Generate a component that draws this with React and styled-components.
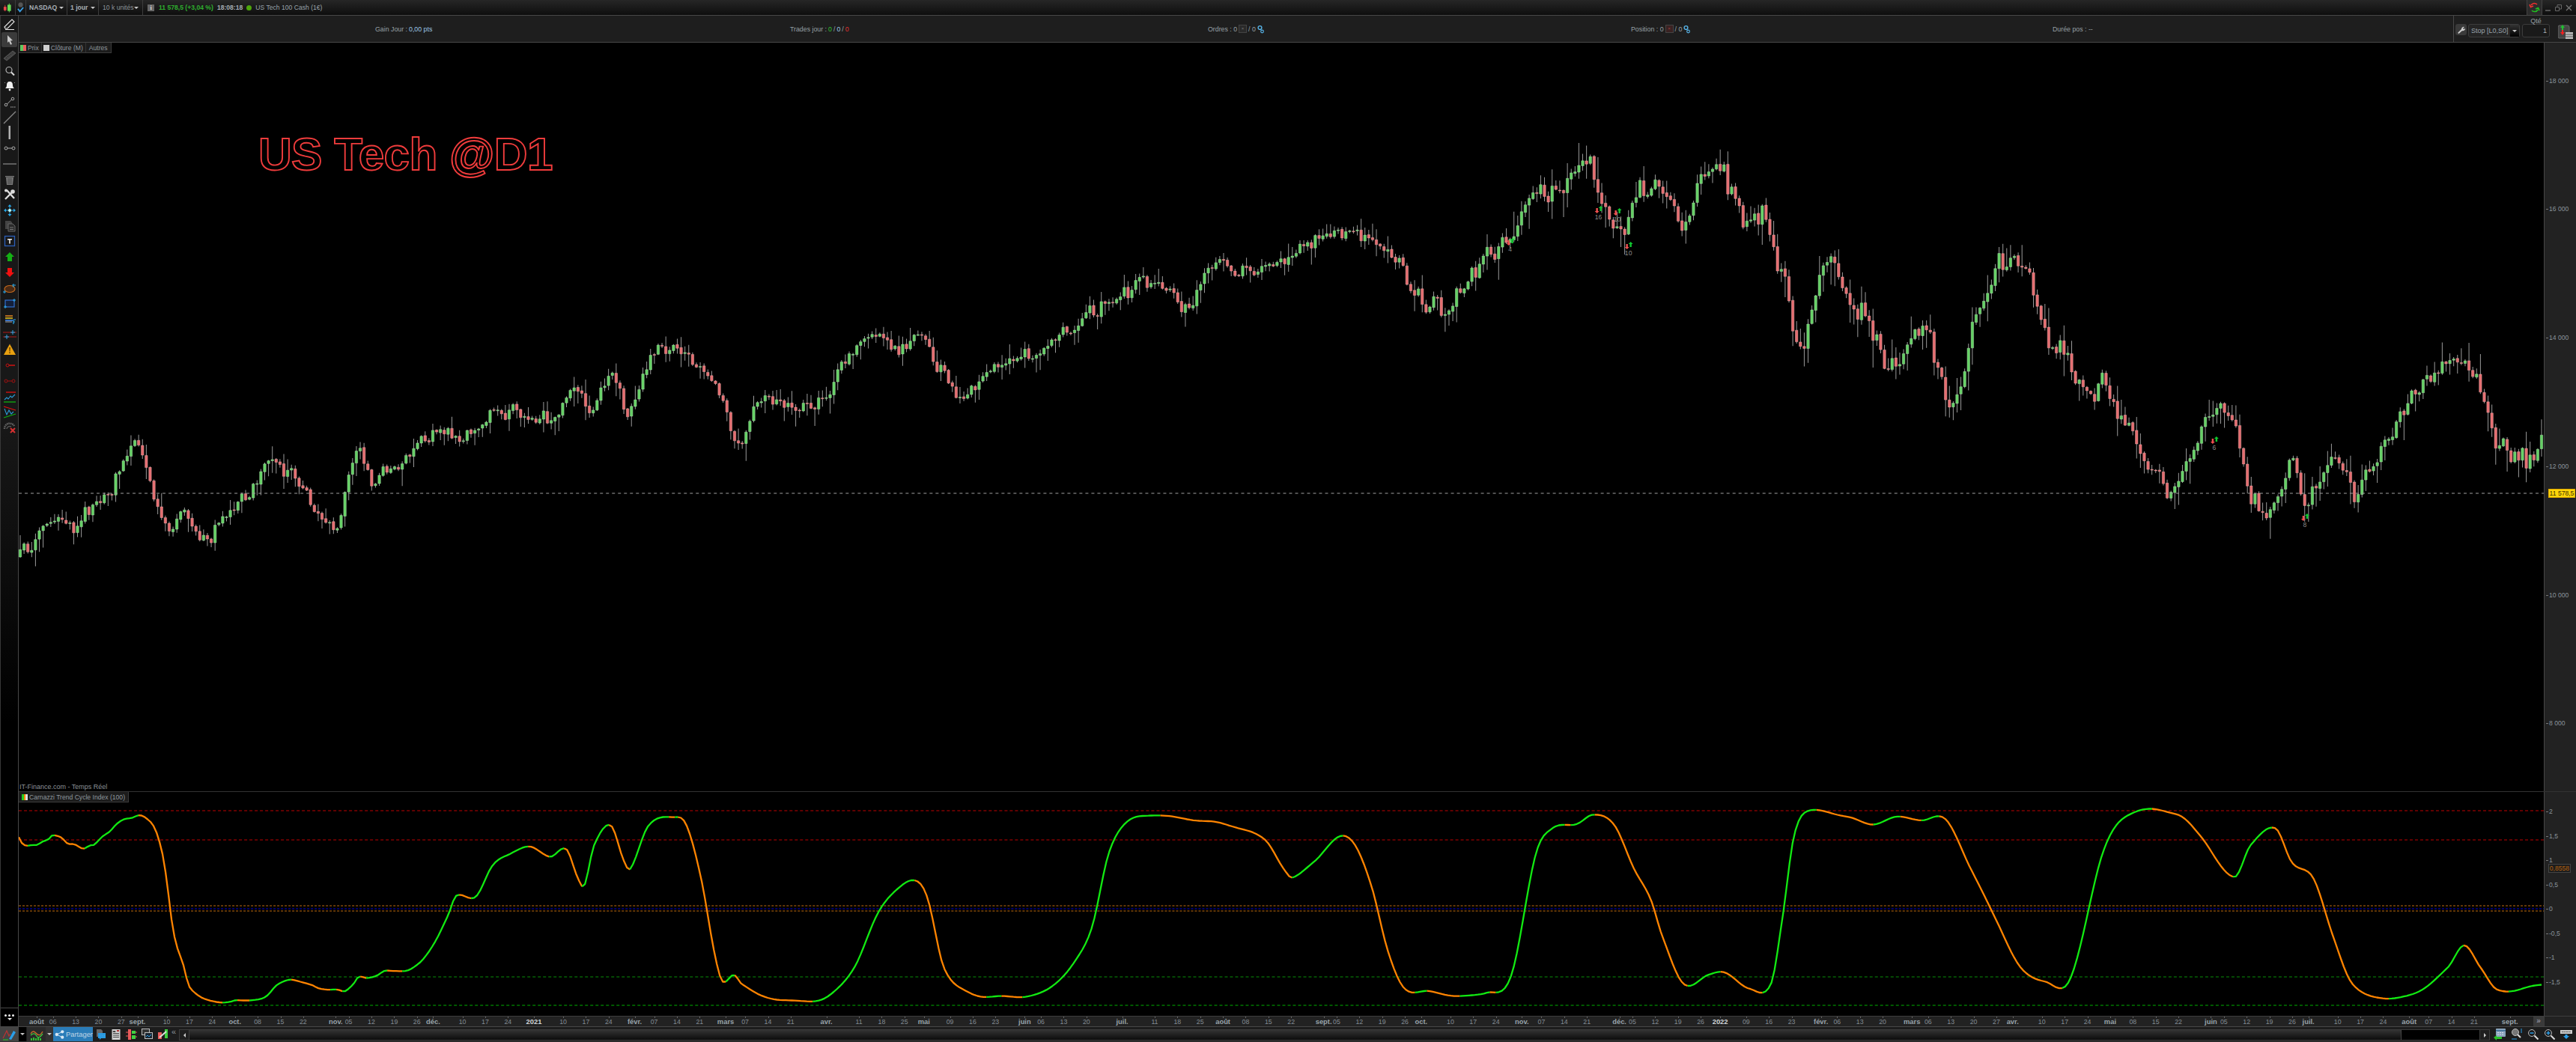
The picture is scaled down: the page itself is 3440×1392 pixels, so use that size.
import React from 'react';
import styled, { createGlobalStyle } from 'styled-components';

const GlobalStyle = createGlobalStyle`
  html, body, #root { margin: 0; padding: 0; height: 100%; background: #000; overflow: hidden; }
  body { font-family: "Liberation Sans", Arial, sans-serif; }
`;

const SCALE = 3440 / 1568;
const BAR = 5.1;

// price curve, read off the picture at 1568 wide
const PRICE_TRACE = [[12,340],[25,322],[35,315],[45,320],[60,305],[72,290],[85,268],[88,280],[92,300],[100,320],[112,310],[125,330],[135,315],[150,300],[165,280],[180,293],[195,310],[205,322],[212,290],[218,272],[226,295],[240,285],[255,275],[270,263],[285,267],[300,255],[318,252],[335,255],[345,240],[360,248],[372,225],[382,250],[395,222],[410,212],[425,225],[437,240],[448,270],[460,250],[470,240],[485,250],[500,243],[512,220],[528,205],[545,210],[560,208],[570,218],[583,243],[595,232],[610,218],[630,216],[650,202],[665,190],[690,177],[710,172],[722,185],[735,163],[755,165],[775,160],[795,150],[815,140],[835,145],[850,160],[862,178],[875,185],[890,178],[905,152],[920,145],[935,115],[950,115],[967,102],[978,125],[988,135],[1000,112],[1015,120],[1025,140],[1037,106],[1050,110],[1062,135],[1072,130],[1085,170],[1097,210],[1110,165],[1125,180],[1135,190],[1150,225],[1165,205],[1175,212],[1190,240],[1205,190],[1222,160],[1235,170],[1245,200],[1258,210],[1270,235],[1285,240],[1300,270],[1310,290],[1325,295],[1340,255],[1350,252],[1360,258],[1370,300],[1380,317],[1395,285],[1405,305],[1420,280],[1435,298],[1450,265],[1470,238],[1480,232],[1497,220],[1510,240],[1520,265],[1535,283],[1547,262]];

// indicator curve: first part from a 2.613x / 3x crop, the rest at 1568 wide
const CYCLE_HEAD = [[67,113],[75,135],[92,152],[115,150],[132,149],[155,132],[170,126],[183,110],[197,110],[218,121],[238,146],[262,150],[290,166],[300,164],[315,151],[330,148],[360,115],[385,97],[410,66],[435,46],[462,38],[488,27],[510,38],[543,85],[570,190],[585,300],[600,440],[610,510],[625,575],[640,620],[660,710],[680,742],[712,767],[770,778],[805,776],[825,771],[845,773],[880,771],[930,755],[965,715],[990,700],[1015,692],[1040,695],[1090,710],[1115,725],[1145,731],[1180,728],[1197,733],[1210,730],[1238,700],[1252,677],[1265,677],[1280,684],[1315,675],[1345,653],[1380,654],[1425,655],[1465,625],[1490,590],[1510,555],[1530,515],[1545,480],[1568,425]];
const CYCLE_TAIL = [[278,546],[290,546],[300,528],[310,521],[322,516],[335,522],[345,517],[352,535],[356,540],[362,515],[372,503],[380,525],[384,530],[395,503],[410,498],[418,502],[427,535],[435,580],[440,598],[447,594],[452,600],[465,607],[490,610],[505,607],[520,590],[535,556],[548,540],[558,537],[565,548],[575,590],[590,605],[610,607],[625,607],[640,602],[655,585],[665,565],[675,520],[685,502],[700,497],[720,499],[745,502],[770,512],[782,530],[787,535],[800,525],[815,510],[825,515],[835,540],[845,580],[855,602],[870,604],[890,607],[905,605],[920,595],[935,520],[945,505],[960,502],[970,497],[983,503],[995,530],[1005,548],[1012,570],[1025,600],[1040,594],[1050,593],[1065,602],[1078,600],[1085,560],[1092,510],[1100,495],[1125,498],[1140,502],[1155,498],[1170,500],[1185,500],[1200,530],[1215,560],[1230,590],[1245,598],[1260,597],[1280,520],[1295,497],[1325,496],[1340,510],[1360,535],[1370,515],[1385,505],[1395,525],[1408,535],[1420,570],[1432,600],[1450,608],[1470,605],[1490,590],[1500,576],[1510,590],[1520,603],[1547,600]];

const rng = (seed) => () => {
  seed |= 0; seed = (seed + 0x6d2b79f5) | 0;
  let t = Math.imul(seed ^ (seed >>> 15), 1 | seed);
  t = (t + Math.imul(t ^ (t >>> 7), 61 | t)) ^ t;
  return ((t ^ (t >>> 14)) >>> 0) / 4294967296;
};

const sampleAt = (pts, x) => {
  let i = 0;
  while (i < pts.length - 2 && pts[i + 1][0] < x) i++;
  const p0 = pts[Math.max(i - 1, 0)], p1 = pts[i], p2 = pts[i + 1], p3 = pts[Math.min(i + 2, pts.length - 1)];
  const t = Math.min(Math.max((x - p1[0]) / (p2[0] - p1[0]), 0), 1);
  const m1 = ((p2[1] - p0[1]) / (p2[0] - p0[0])) * (p2[0] - p1[0]);
  const m2 = ((p3[1] - p1[1]) / (p3[0] - p1[0])) * (p2[0] - p1[0]);
  const t2 = t * t, t3 = t2 * t;
  return (2 * t3 - 3 * t2 + 1) * p1[1] + (t3 - 2 * t2 + t) * m1 + (-2 * t3 + 3 * t2) * p2[1] + (t3 - t2) * m2;
};

const buildCandles = () => {
  const rand = rng(1234);
  const trace = PRICE_TRACE.map(([x, y]) => [x * SCALE, y * SCALE]);
  const wicks = [], up = [], down = [];
  let noise = 0;
  let prev = sampleAt(trace, 28);
  for (let x = 28; x < 3396; x += BAR) {
    const amp = x < 1900 ? 7.5 : 12;
    const r = rand() * 2 - 1;
    noise = noise * 0.4 + r * Math.abs(r) * amp * 1.7;
    const close = sampleAt(trace, x) + noise;
    const open = prev + (rand() - 0.5) * 2;
    const top = Math.min(open, close), bottom = Math.max(open, close);
    const high = top - rand() * rand() * amp * 2.8 - 1;
    const low = bottom + rand() * rand() * amp * 3.2 + 1;
    wicks.push(`M${x.toFixed(1)} ${high.toFixed(1)}V${low.toFixed(1)}`);
    const h = Math.max(bottom - top, 1);
    const body = `M${(x - 1.7).toFixed(1)} ${top.toFixed(1)}h3.4v${h.toFixed(1)}h-3.4z`;
    (close <= open ? up : down).push(body);
    prev = close;
  }
  return { wicks: wicks.join(''), up: up.join(''), down: down.join('') };
};

const buildCycle = () => {
  const head = CYCLE_HEAD.map(([x, y]) => [x / 2.613, 1080 + y / 3]);
  const tail = CYCLE_TAIL.map(([x, y]) => [x * SCALE, y * SCALE]);
  const pts = [...head, ...tail];
  // a small ripple, the real line is never quite flat
  const at = (x) => sampleAt(pts, x) + 0.7 * Math.sin(x / 9) + 0.5 * Math.sin(x / 23);
  const runs = [];
  let last = at(26);
  let rising = true;
  let cur = { rising, d: `M26 ${last.toFixed(1)}` };
  for (let x = 30; x <= 3397; x += 4) {
    const y = at(x);
    const dy = y - last;
    const next = Math.abs(dy) < 0.12 ? rising : dy < 0;
    if (next !== rising) {
      runs.push(cur);
      cur = { rising: next, d: `M${x - 4} ${last.toFixed(1)}` };
      rising = next;
    }
    cur.d += `L${x} ${y.toFixed(1)}`;
    last = y;
  }
  runs.push(cur);
  return runs;
};

const MONTHS = ['janv.', 'févr.', 'mars', 'avr.', 'mai', 'juin', 'juil.', 'août', 'sept.', 'oct.', 'nov.', 'déc.'];

const buildDates = () => {
  const out = [];
  const start = Date.UTC(2020, 7, 1);
  for (let n = 0; n < 765; n++) {
    const d = new Date(start + n * 86400000);
    const x = 50 + n * 4.34;
    const day = d.getUTCDate();
    const year = d.getUTCFullYear();
    const monthDays = new Date(Date.UTC(year, d.getUTCMonth() + 1, 0)).getUTCDate();
    if (x > 3370) break;
    if (day === 1) {
      const isYear = d.getUTCMonth() === 0;
      out.push({ x, text: isYear ? String(year) : MONTHS[d.getUTCMonth()], kind: isYear ? 'year' : 'month' });
    } else if (day >= 5 && monthDays - day >= 4 && d.getUTCDay() === (year === 2020 ? 4 : 0)) {
      out.push({ x, text: String(day).padStart(2, '0'), kind: 'day' });
    }
  }
  return out;
};

const CANDLES = buildCandles();
const CYCLE = buildCycle();
const DATES = buildDates();

const PRICE_TICKS = [['18 000', 108], ['16 000', 279], ['14 000', 451], ['12 000', 623], ['10 000', 795], ['8 000', 966]];
const CYCLE_TICKS = [['2', 1084], ['1,5', 1117], ['1', 1149], ['0,5', 1182], ['0', 1214], ['-0,5', 1247], ['-1', 1279], ['-1,5', 1312]];
const MARKERS = [[2017, 323, '4'], [2135, 280, '16'], [2160, 283, '10'], [2175, 328, '10'], [2957, 588, '6'], [3078, 691, '8']];
const CYCLE_LINES = [[1084, '#c00000', '4 3'], [1123, '#c00000', '4 3'], [1211, '#c06a10', '3 2'], [1215, '#0000d0', '3 2'], [1218, '#c06a10', '3 2'], [1306, '#089008', '4 3'], [1344, '#00b000', '4 3']];

const Frame = styled.div`
  width: 100vw;
  height: 100vh;
  display: flex;
  flex-direction: column;
  background: #1e1e1e;
  color: #9aa4ac;
  font-size: 8.6px;
`;

const TitleBar = styled.header`
  height: 20px;
  flex: none;
  display: flex;
  align-items: center;
  background: linear-gradient(#262626, #0e0e0e);
  border-bottom: 1px solid #474747;
`;

const TitleCell = styled.div`
  height: 100%;
  width: ${(p) => p.$w}px;
  flex: none;
  display: flex;
  align-items: center;
  justify-content: space-between;
  box-sizing: border-box;
  padding: 0 ${(p) => p.$pad ?? 5}px;
  border-right: 1px solid #3c3c3c;
  font-weight: ${(p) => (p.$bold ? 700 : 400)};
  color: ${(p) => (p.$bold ? '#aab2b8' : '#8d969c')};
`;

const Caret = styled.span`
  width: 0;
  height: 0;
  border-left: 3px solid transparent;
  border-right: 3px solid transparent;
  border-top: 3px solid ${(p) => p.$color || '#c8c8c8'};
`;

const QuoteRow = styled.div`
  display: flex;
  align-items: center;
  padding-left: 6px;
  flex: 1;
  gap: 5px;
`;

const InfoBadge = styled.span`
  width: 9px;
  height: 9px;
  background: #666;
  color: #ddd;
  font: 700 8px "Liberation Serif", serif;
  text-align: center;
  line-height: 9px;
  margin-right: 1px;
`;

const QuoteValue = styled.b`
  color: #2fae2f;
`;

const ClockText = styled.b`
  color: #a6aeb4;
`;

const LiveDot = styled.i`
  width: 7px;
  height: 7px;
  border-radius: 50%;
  background: #4da60c;
`;

const SyncButton = styled.div`
  width: 19px;
  height: 20px;
  background: #2c2c2c;
  border-left: 1px solid #444;
  border-right: 1px solid #444;
  margin-right: 3px;
  display: flex;
  align-items: center;
  justify-content: center;
`;

const WindowButtons = styled.div`
  display: flex;
  align-items: center;
  gap: 5px;
  padding-right: 5px;
`;

const Workspace = styled.div`
  flex: 1;
  min-height: 0;
  display: flex;
`;

const Sidebar = styled.nav`
  width: 25px;
  flex: none;
  box-sizing: border-box;
  border-left: 1px solid #383838;
  border-right: 1px solid #474747;
  background: linear-gradient(#181818 40%, #000 70%);
  padding-top: 1px;
  display: flex;
  flex-direction: column;
  align-items: center;
`;

const Tool = styled.div`
  width: 21px;
  height: 20.72px;
  flex: none;
  display: flex;
  align-items: center;
  justify-content: center;
  border-radius: 2px;
  background: ${(p) => (p.$active ? '#3b3b3b' : 'transparent')};
`;

const MoreTools = styled.div`
  margin-top: auto;
  width: 100%;
  height: 24px;
  border-top: 1px solid #474747;
  display: flex;
  flex-direction: column;
  align-items: center;
  justify-content: center;
  gap: 2px;
`;

const Dots = styled.span`
  display: flex;
  gap: 2px;
  i { width: 3px; height: 3px; border-radius: 50%; background: #eee; }
`;

const Main = styled.main`
  flex: 1;
  min-width: 0;
  display: flex;
  flex-direction: column;
`;

const OptionBar = styled.div`
  height: 36px;
  flex: none;
  box-sizing: border-box;
  display: flex;
  align-items: stretch;
  background: #1e1e1e;
  border-bottom: 1px solid #474747;
`;

const StatsRow = styled.div`
  flex: 1;
  display: grid;
  grid-template-columns: 554px 558px 565px 563px 200px;
  padding-left: 476px;
  align-items: center;
  font-size: 8.8px;
  color: #97a0a6;
`;

const Stat = styled.div`
  display: flex;
  align-items: center;
  gap: 2px;
`;

const StatValue = styled.span`
  color: ${(p) => p.$color || '#9cc6e6'};
`;

const MiniBox = styled.span`
  width: 9px;
  height: 9px;
  border: 1px solid #444;
  background: ${(p) => p.$bg || '#2a2a2a'};
  color: ${(p) => p.$fg || '#777'};
  font-size: 6px;
  line-height: 9px;
  text-align: center;
`;

const OrderPanel = styled.div`
  width: 164px;
  flex: none;
  box-sizing: border-box;
  border-left: 1px solid #474747;
  display: flex;
  align-items: flex-start;
  padding: 11px 2px 0 2px;
`;

const WrenchButton = styled.div`
  width: 15px;
  height: 15px;
  background: #3a3a3a;
  border-radius: 3px;
  display: flex;
  align-items: center;
  justify-content: center;
  margin-right: 2px;
`;

const StopSelect = styled.div`
  width: 69px;
  height: 18px;
  box-sizing: border-box;
  border: 1px solid #3c3c3c;
  border-radius: 3px;
  background: #252525;
  display: flex;
  align-items: center;
  padding-left: 3px;
  font-size: 9px;
  color: #9aa4ac;
  justify-content: space-between;
  margin-right: 3px;
`;

const StopArrow = styled.span`
  width: 12px;
  height: 16px;
  background: linear-gradient(#333, #000);
  display: flex;
  align-items: center;
  justify-content: center;
`;

const QtyField = styled.div`
  position: relative;
  width: 37px;
  height: 18px;
  box-sizing: border-box;
  border: 1px solid #3c3c3c;
  border-radius: 3px;
  background: #1a1a1a;
  text-align: right;
  line-height: 16px;
  padding-right: 3px;
  font-size: 9px;
  color: #aab2b8;
  margin-right: 11px;
`;

const QtyLabel = styled.span`
  position: absolute;
  top: -13px;
  left: 0;
  right: 0;
  text-align: center;
  color: #98a1a7;
`;

const PricePane = styled.section`
  height: 1000px;
  flex: none;
  display: flex;
`;

const ChartArea = styled.div`
  position: relative;
  flex: 1;
  min-width: 0;
  background: #000;
  overflow: hidden;
`;

const ChartSvg = styled.svg`
  display: block;
  width: 100%;
  height: 100%;
`;

const LegendTabs = styled.div`
  position: absolute;
  top: 0;
  left: 0;
  display: flex;
  height: 13px;
  background: #1c1c1c;
  border-bottom: 1px solid #3a3a3a;
  border-right: 1px solid #3a3a3a;
`;

const LegendTab = styled.div`
  display: flex;
  align-items: center;
  gap: 2px;
  padding: 0 3px 0 2px;
  border-right: 1px solid #333;
  color: #8f989e;
  &:last-child { border-right: none; padding: 0 4px; }
`;

const Swatch = styled.i`
  width: 8px;
  height: 8px;
  background: ${(p) => p.$bg};
`;

const ChartTitle = styled.div`
  position: absolute;
  left: 320px;
  top: 109px;
  font: 700 62px/80px "Liberation Sans", Arial, sans-serif;
  letter-spacing: -0.7px;
  color: transparent;
  -webkit-text-stroke: 1.9px #f03c3c;
  white-space: nowrap;
`;

const FeedNote = styled.div`
  position: absolute;
  left: 1px;
  bottom: 0;
  color: #8b9197;
  font-size: 9px;
  line-height: 11px;
`;

const Axis = styled.aside`
  position: relative;
  width: 43px;
  flex: none;
  box-sizing: border-box;
  background: #222;
  border-left: 1px solid #474747;
`;

const AxisTick = styled.span`
  position: absolute;
  left: 6px;
  line-height: 10px;
  margin-top: -5px;
  color: #8a949b;
  &::before {
    content: "";
    position: absolute;
    left: -4px;
    top: 5px;
    width: 3px;
    height: 1px;
    background: #777;
  }
`;

const PriceTag = styled.span`
  position: absolute;
  left: 5px;
  width: 36px;
  height: 12px;
  box-sizing: border-box;
  background: #ffd60a;
  border: 1px solid #e0a800;
  color: #3a3000;
  line-height: 10px;
  text-align: center;
`;

const LevelTag = styled.span`
  position: absolute;
  left: 5px;
  width: 30px;
  height: 12px;
  box-sizing: border-box;
  background: #1d1d1d;
  border: 1px solid #444;
  color: #b8620e;
  line-height: 10px;
  text-align: center;
`;

const IndicatorPane = styled.section`
  height: 300px;
  flex: none;
  box-sizing: border-box;
  display: flex;
  border-top: 1px solid #333;
`;

const DateRow = styled.div`
  height: 15px;
  flex: none;
  box-sizing: border-box;
  display: flex;
  background: #222;
  border-top: 1px solid #3d3d3d;
`;

const DateAxis = styled.div`
  position: relative;
  flex: 1;
  overflow: hidden;
`;

const DateLabel = styled.span`
  position: absolute;
  top: 1px;
  transform: translateX(-50%);
  line-height: 12px;
  white-space: nowrap;
  font-size: ${(p) => (p.$kind === 'day' ? 8.8 : 9.4)}px;
  font-weight: ${(p) => (p.$kind === 'day' ? 400 : 700)};
  color: ${(p) => (p.$kind === 'year' ? '#d0d4d8' : p.$kind === 'month' ? '#98a2aa' : '#828c94')};
`;

const DateTick = styled.i`
  position: absolute;
  top: 0;
  width: 1px;
  height: 2px;
  background: #666;
`;

const ForwardButton = styled.div`
  width: 14px;
  flex: none;
  background: #3a3a3a;
  color: #aab;
  line-height: 12px;
  text-align: center;
  font-size: 10px;
`;

const AxisCorner = styled.div`
  width: 43px;
  flex: none;
  background: #222;
  border-left: 1px solid #3d3d3d;
  box-sizing: border-box;
`;

const BottomBar = styled.footer`
  height: 21px;
  flex: none;
  box-sizing: border-box;
  display: flex;
  align-items: stretch;
  background: #1c1c1c;
  border-top: 1px solid #474747;
  border-bottom: 1px solid #333;
`;

const ChartButton = styled.div`
  width: ${(p) => p.$w}px;
  flex: none;
  display: flex;
  align-items: center;
  justify-content: center;
  background: ${(p) => p.$bg};
  margin-right: ${(p) => p.$gap ?? 0}px;
`;

const ShareButton = styled.div`
  width: 53px;
  flex: none;
  display: flex;
  align-items: center;
  gap: 2px;
  padding-left: 2px;
  box-sizing: border-box;
  background: #2a7cb8;
  color: #c0d6e6;
  font-size: 9.4px;
  margin-right: 3px;
`;

const BottomIcons = styled.div`
  display: flex;
  align-items: center;
  gap: ${(p) => p.$gap}px;
  flex: none;
  padding: 0 ${(p) => p.$pad}px;
`;

const Rewind = styled.span`
  color: #8a9298;
  font-size: 11px;
  margin-left: 3px;
  width: 10px;
`;

const ScrollBar = styled.div`
  flex: 1;
  display: flex;
  margin: 3px 0 1px;
  height: 15px;
  box-sizing: border-box;
  border: 1px solid #3c3c3c;
  background: #000;
`;

const ScrollEnd = styled.span`
  width: 12px;
  flex: none;
  background: #1f1f1f;
  border-${(p) => (p.$right ? 'left' : 'right')}: 1px solid #3c3c3c;
  display: flex;
  align-items: center;
  justify-content: center;
`;

const ScrollThumb = styled.span`
  flex: 1;
  background: linear-gradient(#333, #0c0c0c);
  border-right: 1px solid #444;
  margin-right: 104px;
`;

const Tri = styled.i`
  width: 0;
  height: 0;
  border-top: 3px solid transparent;
  border-bottom: 3px solid transparent;
  border-${(p) => (p.$right ? 'left' : 'right')}: 3px solid #ccc;
`;

const MarkerCount = styled.text`
  font: 8.6px "Liberation Sans", Arial, sans-serif;
  fill: #8c8c8c;
  text-anchor: middle;
`;

const Ico = ({ size = 18, w, h, children }) => (
  <svg width={w || size} height={h || size} viewBox={`0 0 ${w || size} ${h || size}`} fill="none" style={{ display: 'block' }}>
    {children}
  </svg>
);

const GearPair = () => (
  <Ico w={9} h={12}>
    <circle cx="3.5" cy="4" r="2.4" stroke="#58b4e8" strokeWidth="1.4" />
    <circle cx="6.5" cy="9" r="1.8" stroke="#58b4e8" strokeWidth="1.2" />
  </Ico>
);

const TOOLS = [
  <Ico key="pencil"><path d="M2 13 12 3l3 3-9 9H3zM3 16.5h12" stroke="#e8e8e8" strokeWidth="1.1" /></Ico>,
  <Ico key="cursor"><path d="M6 3l7 7-3 .4 2 4.6-2 .8-2-4.6L6 13z" fill="#c8c8c8" /></Ico>,
  <Ico key="ruler"><path d="M1 13 13 3l4 3L5 16z" fill="#444" stroke="#666" strokeWidth=".7" /><path d="M4 12l1 1M6 10l1 1M8 8.500l1 1M10 7l1 1M12 5.500l1 1" stroke="#222" /></Ico>,
  <Ico key="search"><circle cx="8" cy="7.500" r="4" stroke="#b0b0b0" strokeWidth="1.2" /><path d="M11 10.500l4 4" stroke="#ddd" strokeWidth="2" /></Ico>,
  <Ico key="bell"><path d="M9 3c3 0 4 2 4 5 0 2 1 3 2 4H3c1-1 2-2 2-4 0-3 1-5 4-5z" fill="#f0f0f0" /><circle cx="9" cy="14" r="1.400" fill="#f0f0f0" /><path d="M2 5l1-1M16 5l-1-1" stroke="#888" /></Ico>,
  <Ico key="link"><circle cx="4" cy="13" r="1.800" stroke="#aaa" /><circle cx="13" cy="5" r="1.800" stroke="#aaa" /><path d="M5.500 12l6-6" stroke="#aaa" /><path d="M10 16h7" stroke="#bbb" strokeDasharray="1.500 1" /></Ico>,
  <Ico key="line"><path d="M1 17 17 1" stroke="#888" strokeWidth="1.200" /></Ico>,
  <Ico key="vline"><rect x="7.500" y="0" width="2.500" height="18" fill="#b0b0b0" /></Ico>,
  <Ico key="hlink"><circle cx="4" cy="9" r="2" stroke="#aaa" /><circle cx="14" cy="9" r="2" stroke="#aaa" /><path d="M6 9h6" stroke="#aaa" /></Ico>,
  <Ico key="hline"><path d="M0 9h18" stroke="#8c8c8c" strokeWidth="1.200" /></Ico>,
  <Ico key="trash"><path d="M3 4h12v1.500H3z" fill="#777" /><path d="M4 6h10l-1 10H5z" fill="#777" /><path d="M7 7v8M9 7v8M11 7v8" stroke="#444" /></Ico>,
  <Ico key="tools"><path d="M3 15 12 6M5 3l10 11" stroke="#ddd" strokeWidth="2.400" /><circle cx="13" cy="5" r="2.800" fill="#ddd" /><circle cx="4" cy="3.500" r="2" fill="#ddd" /></Ico>,
  <Ico key="move"><path d="M9 1l2.500 3h-5zM9 17l2.500-3h-5zM1 9l3-2.500v5zM17 9l-3-2.500v5z" fill="#29a6e6" /><path d="M9 4v10M4 9h10" stroke="#29a6e6" /><circle cx="9" cy="9" r="2" fill="#cfe" /></Ico>,
  <Ico key="copy"><path d="M3 2h7l2 2v9H3z" fill="#444" /><path d="M7 6h6l3 3v7H7z" fill="#2b2b2b" stroke="#666" /><path d="M9 11h5M9 13.500h5" stroke="#777" /></Ico>,
  <Ico key="text"><rect x="2.500" y="2.500" width="13" height="13" stroke="#2b5fb8" strokeWidth="1.300" /><path d="M6 6h6v1.500h-2.200v5H8.200v-5H6z" fill="#eee" /></Ico>,
  <Ico key="up"><path d="M9 3l6 6h-3v6H6V9H3z" fill="#14b014" /></Ico>,
  <Ico key="down"><path d="M9 15l6-6h-3V3H6v6H3z" fill="#f01010" /></Ico>,
  <Ico key="ellipse"><ellipse cx="9" cy="10" rx="7" ry="4.500" fill="#4a2a14" stroke="#c46a1e" strokeWidth="1.200" /><path d="M14 3v5M12 5h5M2 12v4M0 14h4" stroke="#29a6e6" /></Ico>,
  <Ico key="rect"><rect x="3" y="5" width="12" height="9" stroke="#2f6fd0" strokeWidth="1.200" fill="#14203a" /><path d="M15 3v4M13 5h4M3 12v4M1 14h4" stroke="#29a6e6" /></Ico>,
  <Ico key="fib"><path d="M3 4h10v2H3z" fill="#b06a20" /><path d="M3 7h10v2H3z" fill="#b8a020" /><path d="M3 10h10v2H3z" fill="#3a70c0" /><path d="M3 13h9" stroke="#aaa" /><path d="M14 10v6M14 10h3M14 13h2" stroke="#29a6e6" strokeWidth="1.200" /></Ico>,
  <Ico key="lines"><path d="M0 6h18M0 12h18" stroke="#b01818" /><path d="M13 3v6M10 6h6M5 9v6M2 12h6" stroke="#29a6e6" /></Ico>,
  <Ico key="warning"><path d="M9 1.500 17 16H1z" fill="#e8a010" /><path d="M8.200 6h1.600l-.3 5.500h-1zM8.200 12.500h1.600V14H8.200z" fill="#5a3a00" /></Ico>,
  <Ico key="pin"><circle cx="6" cy="9" r="2" stroke="#c01010" /><path d="M8 9h8" stroke="#e01010" strokeWidth="1.400" /></Ico>,
  <Ico key="redlink"><circle cx="4" cy="9" r="2" stroke="#a01010" /><circle cx="14" cy="9" r="2" stroke="#a01010" /><path d="M6 9h6" stroke="#a01010" /></Ico>,
  <Ico key="channel"><path d="M4 3h13" stroke="#e01010" strokeWidth="1.300" /><path d="M1 16h16" stroke="#10b010" strokeWidth="1.300" /><path d="M2 13l3-3 2 2 3-4 2 2 4-4" stroke="#2a9ad6" strokeWidth="1.100" /></Ico>,
  <Ico key="wedge"><path d="M1 2l16 5" stroke="#e01010" strokeWidth="1.300" /><path d="M1 17l16-5" stroke="#10b010" strokeWidth="1.300" /><path d="M2 5l3 8 3-6 3 5 3-3" stroke="#2a9ad6" strokeWidth="1.100" /></Ico>,
  <Ico key="gauge"><path d="M2 11a7 7 0 0 1 13-4" stroke="#666" strokeWidth="2.400" strokeDasharray="1.600 .8" /><path d="M5 11a4 4 0 0 1 6-3" stroke="#555" strokeWidth="1.500" /><path d="M10 10l6 6M16 10l-6 6" stroke="#d83030" strokeWidth="2" /></Ico>,
];

const Candles = () => (
  <ChartSvg viewBox="26 57 3371 1000" preserveAspectRatio="none">
    <path d={CANDLES.wicks} stroke="#9a9a9a" strokeWidth="1" />
    <path d={CANDLES.up} fill="#64d264" stroke="#a8dca8" strokeWidth=".5" />
    <path d={CANDLES.down} fill="#e66d70" stroke="#e8a6a6" strokeWidth=".5" />
    <path d="M26 659H3397" stroke="#a0a0a0" strokeDasharray="4 4" />
    {MARKERS.map(([x, y, n]) => (
      <g key={x}>
        <path d={`M${x - 2} ${y + 5}l-3-3h1.800v-4h2.400v4h1.800z`} fill="#f05050" />
        <path d={`M${x + 3} ${y - 5}l3 3h-1.800v4h-2.400v-4h-1.800z`} fill="#10c830" />
        <MarkerCount x={x} y={y + 13}>{n}</MarkerCount>
      </g>
    ))}
  </ChartSvg>
);

const CyclePlot = () => (
  <ChartSvg viewBox="26 1059 3371 299" preserveAspectRatio="none">
    {CYCLE_LINES.map(([y, color, dash]) => (
      <path key={y} d={`M26 ${y}H3397`} stroke={color} strokeDasharray={dash} />
    ))}
    {CYCLE.map((run, i) => (
      <path key={i} d={run.d} fill="none" stroke={run.rising ? '#12ea12' : '#ff8400'} strokeWidth="2.300" strokeLinejoin="round" />
    ))}
  </ChartSvg>
);

const App = () => (
  <>
    <GlobalStyle />
    <Frame>
      <TitleBar>
        <TitleCell $w={21} $pad={4}>
          <Ico w={13} h={13}>
            <path d="M3 2.500v9" stroke="#e04040" />
            <rect x="1" y="5" width="4" height="5" fill="#e84848" />
            <path d="M9 0v13" stroke="#66cc55" />
            <rect x="6.500" y="2" width="5" height="9" fill="#66dd55" />
          </Ico>
        </TitleCell>
        <TitleCell $w={14} $pad={2}>
          <Ico w={10} h={16}>
            <circle cx="5" cy="4" r="3.500" fill="#555" />
            <path d="M1 10l3 4 5-6" stroke="#3aa0e8" strokeWidth="2" />
          </Ico>
        </TitleCell>
        <TitleCell $w={55} $bold $pad={4}>NASDAQ<Caret /></TitleCell>
        <TitleCell $w={42} $bold $pad={4}>1 jour<Caret /></TitleCell>
        <TitleCell $w={59} $pad={5}>10 k unités<Caret /></TitleCell>
        <QuoteRow>
          <InfoBadge>i</InfoBadge>
          <QuoteValue>11 578,5 (+3,04 %)</QuoteValue>
          <ClockText>18:08:18</ClockText>
          <LiveDot />
          <span>US Tech 100 Cash (1€)</span>
        </QuoteRow>
        <SyncButton>
          <Ico w={15} h={14}>
            <path d="M11 3a5 5 0 0 0-8 1M1 3l1.500 3.500L6 5" stroke="#f03030" strokeWidth="1.600" />
            <path d="M4 11a5 5 0 0 0 8-1M14 11l-1.500-3.500L9 9" stroke="#20c020" strokeWidth="1.600" />
          </Ico>
        </SyncButton>
        <WindowButtons>
          <Ico w={9} h={9}><path d="M1 8h7" stroke="#666" strokeWidth="1.500" /></Ico>
          <Ico w={9} h={9}><path d="M.5 3.500h5v5h-5zM3 3V.5h5.500V6H6" stroke="#666" /></Ico>
          <Ico w={9} h={9}><path d="M1 1l7 7M8 1 1 8" stroke="#777" strokeWidth="1.300" /></Ico>
        </WindowButtons>
      </TitleBar>
      <Workspace>
        <Sidebar>
          {TOOLS.map((icon, i) => (
            <Tool key={i} $active={i === 1}>{icon}</Tool>
          ))}
          <MoreTools>
            <Dots><i /><i /><i /></Dots>
            <Caret $color="#eee" />
          </MoreTools>
        </Sidebar>
        <Main>
          <OptionBar>
            <StatsRow>
              <Stat>Gain Jour : <StatValue>0,00 pts</StatValue></Stat>
              <Stat>
                Trades jour : <StatValue $color="#2fc02f">0</StatValue> / <StatValue>0</StatValue> / <StatValue $color="#e03030">0</StatValue>
              </Stat>
              <Stat>Ordres : 0 <MiniBox>×</MiniBox> / 0 <GearPair /></Stat>
              <Stat>Position : 0 <MiniBox $bg="#3a2222" $fg="#a04040">×</MiniBox> / 0 <GearPair /></Stat>
              <Stat>Durée pos : --</Stat>
            </StatsRow>
            <OrderPanel>
              <WrenchButton>
                <Ico w={11} h={11}><path d="M1 10l5-5a3 3 0 0 1 4-3L8 4l1 1 2-1a3 3 0 0 1-4 3L2.500 11z" fill="#cfcfcf" /></Ico>
              </WrenchButton>
              <StopSelect>
                Stop [L0,S0]
                <StopArrow><Caret /></StopArrow>
              </StopSelect>
              <QtyField>
                <QtyLabel>Qté</QtyLabel>
                1
              </QtyField>
              <Ico w={21} h={21}>
                <rect x="0" y="2" width="15" height="17" rx="2" fill="#444" stroke="#666" />
                <path d="M6 1l3 4H7v3H5V5H3z" fill="#20c030" />
                <path d="M6 15l3-4H7V8H5v3H3z" fill="#f02020" />
                <path d="M10 11h10v9H10z" fill="#bbb" />
                <path d="M10 14h10M10 17h10" stroke="#555" />
              </Ico>
            </OrderPanel>
          </OptionBar>
          <PricePane>
            <ChartArea>
              <Candles />
              <LegendTabs>
                <LegendTab><Swatch $bg="linear-gradient(90deg, #5ec85e 50%, #e85d5d 50%)" />Prix</LegendTab>
                <LegendTab><Swatch $bg="#cfcfcf" />Clôture (M)</LegendTab>
                <LegendTab>Autres</LegendTab>
              </LegendTabs>
              <ChartTitle>US Tech @D1</ChartTitle>
              <FeedNote>IT-Finance.com - Temps Réel</FeedNote>
            </ChartArea>
            <Axis>
              {PRICE_TICKS.map(([label, y]) => (
                <AxisTick key={label} style={{ top: y - 57 }}>{label}</AxisTick>
              ))}
              <PriceTag style={{ top: 596 }}>11 578,5</PriceTag>
            </Axis>
          </PricePane>
          <IndicatorPane>
            <ChartArea>
              <CyclePlot />
              <LegendTabs>
                <LegendTab>
                  <Swatch $bg="linear-gradient(90deg, #22cc22 33%, #ff8400 33% 66%, #dddddd 66%)" />
                  Carnazzi Trend Cycle Index (100)
                </LegendTab>
              </LegendTabs>
            </ChartArea>
            <Axis>
              {CYCLE_TICKS.map(([label, y]) => (
                <AxisTick key={label} style={{ top: y - 1058 }}>{label}</AxisTick>
              ))}
              <LevelTag style={{ top: 96 }}>0,8558</LevelTag>
            </Axis>
          </IndicatorPane>
          <DateRow>
            <DateAxis>
              {DATES.map((d) => (
                <React.Fragment key={d.x}>
                  <DateTick style={{ left: d.x - 26 }} />
                  <DateLabel $kind={d.kind} style={{ left: d.x - 26 }}>{d.text}</DateLabel>
                </React.Fragment>
              ))}
            </DateAxis>
            <ForwardButton>»</ForwardButton>
            <AxisCorner />
          </DateRow>
        </Main>
      </Workspace>
      <BottomBar>
        <ChartButton $w={25} $bg="#444">
          <Ico w={19} h={17}>
            <path d="M1 14 6 4l3 7 2-3" stroke="#b33" strokeWidth="1.200" />
            <path d="M9 15 15 4l3 2-6 10z" fill="#2a9ee8" />
            <path d="M1 16h7" stroke="#2c2" />
          </Ico>
        </ChartButton>
        <ChartButton $w={10} $bg="#000" $gap={1}><Caret /></ChartButton>
        <ChartButton $w={25} $bg="#2a2a2a">
          <Ico w={18} h={16}>
            <path d="M1 7c3-5 5-3 8 0s5 2 8-3" stroke="#d06a2a" strokeWidth="1.300" />
            <path d="M1 9c3-3 6-3 8 1s5 1 8-3" stroke="#40c040" strokeWidth="1.300" />
            <path d="M1 16v-3h2v3zM4 16v-4h2v4zM7 16v-3h2v3zM10 16v-5h2v5zM13 16v-3h2v3z" fill="#30c030" />
          </Ico>
        </ChartButton>
        <ChartButton $w={10} $bg="#333"><Caret /></ChartButton>
        <ShareButton>
          <Ico w={14} h={14}>
            <circle cx="3" cy="7" r="2.300" fill="#d8e8f4" />
            <circle cx="11" cy="3" r="2.300" fill="#d8e8f4" />
            <circle cx="11" cy="11" r="2.300" fill="#d8e8f4" />
            <path d="M3 7l8-4M3 7l8 4" stroke="#d8e8f4" />
          </Ico>
          Partager
        </ShareButton>
        <BottomIcons $gap={6} $pad={1}>
          <Ico w={14} h={16}>
            <path d="M1 1h6l2 2v8H1z" fill="#666" />
            <path d="M3 6h10v7H7l-2 2v-2H3z" fill="#2a9ae0" />
            <path d="M5 9.500h.1M8 9.500h.1M11 9.500h.1" stroke="#fff" strokeWidth="1.200" />
          </Ico>
          <Ico w={14} h={15}>
            <rect x="1.500" y="1" width="11" height="14" fill="#d0d0d0" />
            <path d="M3 3.500h3v1H3zM3 6.500h8M3 9h8M3 11.500h8" stroke="#444" />
            <path d="M8 2h3v2H8z" fill="#b03030" />
          </Ico>
          <Ico w={15} h={16}>
            <path d="M3 1h4v14H3z" fill="#e85a5a" />
            <path d="M8 3h5v4H8z" fill="#40d040" />
            <path d="M8 9h5v5H8z" fill="#40d040" />
            <path d="M0 5h3M0 10h3M13 5h2M13 11h2" stroke="#e85a5a" />
          </Ico>
          <Ico w={15} h={15}>
            <rect x=".5" y=".5" width="10" height="8" fill="#333" stroke="#bbb" />
            <rect x="4.500" y="5.500" width="10" height="8" fill="#1b2530" stroke="#bbb" />
            <path d="M6 11l2-2 2 2 3-3" stroke="#2a9ee8" />
          </Ico>
          <Ico w={15} h={16}>
            <path d="M10 1h4v12h-4z" fill="#40d040" />
            <path d="M1 5h5v9H1z" fill="#e85a5a" />
            <path d="M3 12l9-8" stroke="#ddd" strokeWidth="2" />
          </Ico>
        </BottomIcons>
        <Rewind>«</Rewind>
        <ScrollBar>
          <ScrollEnd><Tri /></ScrollEnd>
          <ScrollThumb />
          <ScrollEnd $right><Tri $right /></ScrollEnd>
        </ScrollBar>
        <BottomIcons $gap={6} $pad={5}>
          <Ico w={17} h={17}>
            <rect x="3" y="1" width="13" height="11" rx="1" fill="#8aa4bc" />
            <path d="M3 3h13v1.500H3z" fill="#3b6b94" />
            <path d="M5 6.500h9M5 9h9" stroke="#dde" strokeDasharray="2 1" />
            <path d="M0 13l4-3v2h7v3H4v2z" fill="#28c028" />
          </Ico>
          <Ico w={16} h={17}>
            <circle cx="6" cy="6" r="4.500" fill="#777" stroke="#bbb" />
            <path d="M9 9l4 4" stroke="#ddd" strokeWidth="2" />
            <path d="M14 1v6M1 15h7" stroke="#2a9ee8" />
          </Ico>
          <Ico w={16} h={16}>
            <circle cx="6" cy="6" r="4.500" stroke="#bbb" />
            <path d="M3.500 6h5" stroke="#2a9ee8" strokeWidth="1.500" />
            <path d="M9.500 9.500l5 5" stroke="#ddd" strokeWidth="2" />
          </Ico>
          <Ico w={16} h={16}>
            <circle cx="6" cy="6" r="4.500" stroke="#bbb" />
            <path d="M3.500 6h5M6 3.500v5" stroke="#2a9ee8" strokeWidth="1.500" />
            <path d="M9.500 9.500l5 5" stroke="#ddd" strokeWidth="2" />
          </Ico>
          <Ico w={16} h={14}>
            <rect x="0" y="1" width="16" height="5" fill="#ccc" />
            <path d="M2 3.500h12" stroke="#333" strokeDasharray="1.500 1" />
            <path d="M8 13l4-4h-2.500V7h-3v2H4z" fill="#2a9ee8" />
          </Ico>
        </BottomIcons>
      </BottomBar>
    </Frame>
  </>
);

export default App;
